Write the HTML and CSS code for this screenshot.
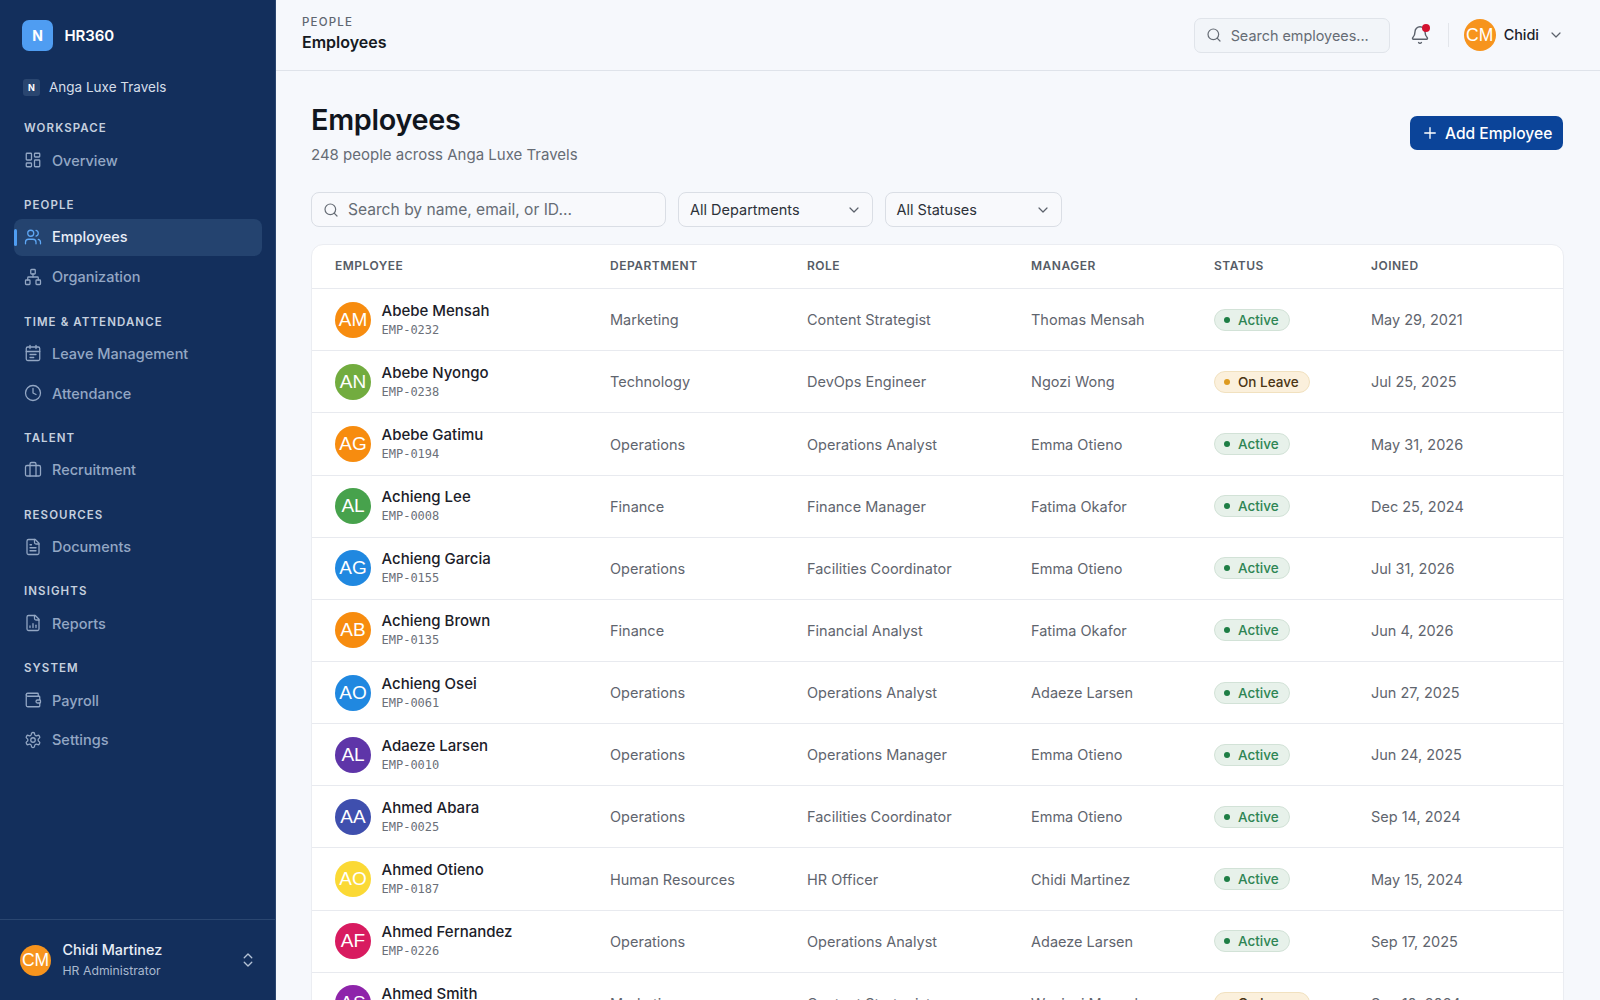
FILE: index.html
```html
<!DOCTYPE html>
<html lang="en">
<head>
<meta charset="utf-8">
<title>Employees</title>
<link rel="stylesheet" href="styles.css">
</head>
<body>
<svg class="defs" width="0" height="0">
  <defs>
    <symbol id="i-search" viewBox="0 0 24 24"><circle cx="11" cy="11" r="8"/><path d="m21 21-4.3-4.3"/></symbol>
    <symbol id="i-chev" viewBox="0 0 24 24"><path d="m6 9 6 6 6-6"/></symbol>
  </defs>
</svg>
<div class="app">
  <aside class="sidebar">
    <div class="brand"><span class="brand-logo">N</span><span class="brand-name">HR360</span></div>
    <div class="org"><span class="org-badge">N</span><span>Anga Luxe Travels</span></div>
    <nav class="nav">
      <div class="nav-label">WORKSPACE</div>
      <a class="nav-item"><svg class="ni" viewBox="0 0 24 24"><rect x="3" y="3" width="7" height="9" rx="1"/><rect x="14" y="3" width="7" height="5" rx="1"/><rect x="14" y="12" width="7" height="9" rx="1"/><rect x="3" y="16" width="7" height="5" rx="1"/></svg>Overview</a>
      <div class="nav-label">PEOPLE</div>
      <a class="nav-item active"><svg class="ni" viewBox="0 0 24 24"><path d="M16 21v-2a4 4 0 0 0-4-4H6a4 4 0 0 0-4 4v2"/><circle cx="9" cy="7" r="4"/><path d="M22 21v-2a4 4 0 0 0-3-3.87"/><path d="M16 3.13a4 4 0 0 1 0 7.75"/></svg>Employees</a>
      <a class="nav-item gap-top"><svg class="ni" viewBox="0 0 24 24"><rect x="16" y="16" width="6" height="6" rx="1"/><rect x="2" y="16" width="6" height="6" rx="1"/><rect x="9" y="2" width="6" height="6" rx="1"/><path d="M5 16v-3a1 1 0 0 1 1-1h12a1 1 0 0 1 1 1v3"/><path d="M12 12V8"/></svg>Organization</a>
      <div class="nav-label">TIME &amp; ATTENDANCE</div>
      <a class="nav-item"><svg class="ni" viewBox="0 0 24 24"><path d="M8 2v4"/><path d="M16 2v4"/><rect x="3" y="4" width="18" height="18" rx="2"/><path d="M3 10h18"/><path d="M8 14h8"/><path d="M8 18h5"/></svg>Leave Management</a>
      <a class="nav-item gap-top"><svg class="ni" viewBox="0 0 24 24"><circle cx="12" cy="12" r="10"/><path d="M12 6v6l4 2"/></svg>Attendance</a>
      <div class="nav-label">TALENT</div>
      <a class="nav-item"><svg class="ni" viewBox="0 0 24 24"><path d="M16 20V4a2 2 0 0 0-2-2h-4a2 2 0 0 0-2 2v16"/><rect x="2" y="6" width="20" height="14" rx="2"/></svg>Recruitment</a>
      <div class="nav-label">RESOURCES</div>
      <a class="nav-item"><svg class="ni" viewBox="0 0 24 24"><path d="M15 2H6a2 2 0 0 0-2 2v16a2 2 0 0 0 2 2h12a2 2 0 0 0 2-2V7Z"/><path d="M14 2v4a2 2 0 0 0 2 2h4"/><path d="M10 9H8"/><path d="M16 13H8"/><path d="M16 17H8"/></svg>Documents</a>
      <div class="nav-label">INSIGHTS</div>
      <a class="nav-item"><svg class="ni" viewBox="0 0 24 24"><path d="M15 2H6a2 2 0 0 0-2 2v16a2 2 0 0 0 2 2h12a2 2 0 0 0 2-2V7Z"/><path d="M14 2v4a2 2 0 0 0 2 2h4"/><path d="M8 18v-2"/><path d="M12 18v-5"/><path d="M16 18v-3"/></svg>Reports</a>
      <div class="nav-label">SYSTEM</div>
      <a class="nav-item"><svg class="ni" viewBox="0 0 24 24"><path d="M19 7V4a1 1 0 0 0-1-1H5a2 2 0 0 0 0 4h15a1 1 0 0 1 1 1v4h-3a2 2 0 0 0 0 4h3a1 1 0 0 0 1-1v-2a1 1 0 0 0-1-1"/><path d="M3 5v14a2 2 0 0 0 2 2h15a1 1 0 0 0 1-1v-4"/></svg>Payroll</a>
      <a class="nav-item gap-top"><svg class="ni" viewBox="0 0 24 24"><path d="M12.22 2h-.44a2 2 0 0 0-2 2v.18a2 2 0 0 1-1 1.73l-.43.25a2 2 0 0 1-2 0l-.15-.08a2 2 0 0 0-2.73.73l-.22.38a2 2 0 0 0 .73 2.73l.15.1a2 2 0 0 1 1 1.72v.51a2 2 0 0 1-1 1.74l-.15.09a2 2 0 0 0-.73 2.73l.22.38a2 2 0 0 0 2.73.73l.15-.08a2 2 0 0 1 2 0l.43.25a2 2 0 0 1 1 1.73V20a2 2 0 0 0 2 2h.44a2 2 0 0 0 2-2v-.18a2 2 0 0 1 1-1.73l.43-.25a2 2 0 0 1 2 0l.15.08a2 2 0 0 0 2.73-.73l.22-.39a2 2 0 0 0-.73-2.73l-.15-.08a2 2 0 0 1-1-1.74v-.5a2 2 0 0 1 1-1.74l.15-.09a2 2 0 0 0 .73-2.73l-.22-.38a2 2 0 0 0-2.73-.73l-.15.08a2 2 0 0 1-2 0l-.43-.25a2 2 0 0 1-1-1.73V4a2 2 0 0 0-2-2z"/><circle cx="12" cy="12" r="3"/></svg>Settings</a>
    </nav>
    <div class="side-user">
      <span class="avatar a-side">CM</span>
      <div class="side-user-text"><div class="side-user-name">Chidi Martinez</div><div class="side-user-role">HR Administrator</div></div>
      <svg class="updown" viewBox="0 0 24 24"><path d="m7 15 5 5 5-5"/><path d="m7 9 5-5 5 5"/></svg>
    </div>
  </aside>
  <div class="main">
    <header class="topbar">
      <div class="crumb"><div class="crumb-top">PEOPLE</div><div class="crumb-title">Employees</div></div>
      <div class="top-right">
        <div class="top-search"><svg class="ic16"><use href="#i-search"/></svg><span>Search employees...</span></div>
        <div class="bell"><svg viewBox="0 0 24 24"><path d="M10.27 21a2 2 0 0 0 3.46 0"/><path d="M3.26 15.33A1 1 0 0 0 4 17h16a1 1 0 0 0 .74-1.67C19.41 13.96 18 12.5 18 8A6 6 0 0 0 6 8c0 4.5-1.41 5.96-2.74 7.33"/></svg><span class="bell-dot"></span></div>
        <div class="vsep"></div>
        <div class="top-user"><span class="avatar a-top">CM</span><span class="top-user-name">Chidi</span><svg class="ic16"><use href="#i-chev"/></svg></div>
      </div>
    </header>
    <main class="content">
      <div class="page-head">
        <div><h1>Employees</h1><p>248 people across Anga Luxe Travels</p></div>
        <button class="add-btn"><svg viewBox="0 0 24 24"><path d="M5 12h14"/><path d="M12 5v14"/></svg>Add Employee</button>
      </div>
      <div class="filters">
        <div class="f-search"><svg class="ic16"><use href="#i-search"/></svg><span>Search by name, email, or ID...</span></div>
        <div class="f-select f-dept"><span>All Departments</span><svg class="ic16"><use href="#i-chev"/></svg></div>
        <div class="f-select f-status"><span>All Statuses</span><svg class="ic16"><use href="#i-chev"/></svg></div>
      </div>
      <div class="table-card">
        <div class="row head"><div>EMPLOYEE</div><div>DEPARTMENT</div><div>ROLE</div><div>MANAGER</div><div>STATUS</div><div>JOINED</div></div>

        <div class="row"><div class="emp"><span class="avatar c-orange">AM</span><div><div class="emp-name">Abebe Mensah</div><div class="emp-id">EMP-0232</div></div></div><div>Marketing</div><div>Content Strategist</div><div>Thomas Mensah</div><div><span class="pill active-pill"><i></i>Active</span></div><div>May 29, 2021</div></div>
        <div class="row"><div class="emp"><span class="avatar c-lime">AN</span><div><div class="emp-name">Abebe Nyongo</div><div class="emp-id">EMP-0238</div></div></div><div>Technology</div><div>DevOps Engineer</div><div>Ngozi Wong</div><div><span class="pill leave-pill"><i></i>On Leave</span></div><div>Jul 25, 2025</div></div>
        <div class="row"><div class="emp"><span class="avatar c-orange">AG</span><div><div class="emp-name">Abebe Gatimu</div><div class="emp-id">EMP-0194</div></div></div><div>Operations</div><div>Operations Analyst</div><div>Emma Otieno</div><div><span class="pill active-pill"><i></i>Active</span></div><div>May 31, 2026</div></div>
        <div class="row"><div class="emp"><span class="avatar c-green">AL</span><div><div class="emp-name">Achieng Lee</div><div class="emp-id">EMP-0008</div></div></div><div>Finance</div><div>Finance Manager</div><div>Fatima Okafor</div><div><span class="pill active-pill"><i></i>Active</span></div><div>Dec 25, 2024</div></div>
        <div class="row"><div class="emp"><span class="avatar c-blue">AG</span><div><div class="emp-name">Achieng Garcia</div><div class="emp-id">EMP-0155</div></div></div><div>Operations</div><div>Facilities Coordinator</div><div>Emma Otieno</div><div><span class="pill active-pill"><i></i>Active</span></div><div>Jul 31, 2026</div></div>
        <div class="row"><div class="emp"><span class="avatar c-orange">AB</span><div><div class="emp-name">Achieng Brown</div><div class="emp-id">EMP-0135</div></div></div><div>Finance</div><div>Financial Analyst</div><div>Fatima Okafor</div><div><span class="pill active-pill"><i></i>Active</span></div><div>Jun 4, 2026</div></div>
        <div class="row"><div class="emp"><span class="avatar c-blue">AO</span><div><div class="emp-name">Achieng Osei</div><div class="emp-id">EMP-0061</div></div></div><div>Operations</div><div>Operations Analyst</div><div>Adaeze Larsen</div><div><span class="pill active-pill"><i></i>Active</span></div><div>Jun 27, 2025</div></div>
        <div class="row"><div class="emp"><span class="avatar c-deep">AL</span><div><div class="emp-name">Adaeze Larsen</div><div class="emp-id">EMP-0010</div></div></div><div>Operations</div><div>Operations Manager</div><div>Emma Otieno</div><div><span class="pill active-pill"><i></i>Active</span></div><div>Jun 24, 2025</div></div>
        <div class="row"><div class="emp"><span class="avatar c-indigo">AA</span><div><div class="emp-name">Ahmed Abara</div><div class="emp-id">EMP-0025</div></div></div><div>Operations</div><div>Facilities Coordinator</div><div>Emma Otieno</div><div><span class="pill active-pill"><i></i>Active</span></div><div>Sep 14, 2024</div></div>
        <div class="row"><div class="emp"><span class="avatar c-yellow">AO</span><div><div class="emp-name">Ahmed Otieno</div><div class="emp-id">EMP-0187</div></div></div><div>Human Resources</div><div>HR Officer</div><div>Chidi Martinez</div><div><span class="pill active-pill"><i></i>Active</span></div><div>May 15, 2024</div></div>
        <div class="row"><div class="emp"><span class="avatar c-pink">AF</span><div><div class="emp-name">Ahmed Fernandez</div><div class="emp-id">EMP-0226</div></div></div><div>Operations</div><div>Operations Analyst</div><div>Adaeze Larsen</div><div><span class="pill active-pill"><i></i>Active</span></div><div>Sep 17, 2025</div></div>
        <div class="row"><div class="emp"><span class="avatar c-purple">AS</span><div><div class="emp-name">Ahmed Smith</div><div class="emp-id">EMP-0110</div></div></div><div>Marketing</div><div>Content Strategist</div><div>Wanjazi Mensah</div><div><span class="pill leave-pill"><i></i>On Leave</span></div><div>Sep 10, 2024</div></div>
      </div>
    </main>
  </div>
</div>
</body>
</html>
```
FILE: styles.css
```css
* { box-sizing: border-box; }
html, body { margin: 0; height: 100%; overflow: hidden; }
body { font-family: Inter, "Liberation Sans", sans-serif; background: #f6f8fc; color: #5b616b; }
.defs { position: absolute; }
svg { fill: none; stroke: currentColor; stroke-width: 2; stroke-linecap: round; stroke-linejoin: round; flex: none; }
.app { display: flex; height: 1000px; }

.sidebar { width: 276px; flex: none; background: #132f5c; border-right: 1px solid #2a4670; display: flex; flex-direction: column; }
.brand { display: flex; align-items: center; gap: 11.5px; padding: 0 22px; height: 71px; }
.brand-logo { width: 31px; height: 31px; border-radius: 7px; background: #4f9df2; color: #fff; font-weight: 700; font-size: 14px; display: flex; align-items: center; justify-content: center; }
.brand-name { color: #fff; font-weight: 600; font-size: 15px; letter-spacing: -0.1px; }
.org { display: flex; align-items: center; gap: 9px; padding: 0 23px; height: 30px; margin-top: 1px; color: #d5dee9; font-size: 13.5px; }
.org-badge { width: 17px; height: 17px; border-radius: 3px; background: #2a4670; color: #fff; font-size: 9px; font-weight: 700; display: flex; align-items: center; justify-content: center; }
.nav { flex: 1; padding: 0 13px 0 14px; }
.nav-label { color: #c5d0df; font-size: 11.5px; font-weight: 600; letter-spacing: 1.08px; padding-left: 10px; margin-top: 17.9px; line-height: 16px; height: 16px; margin-bottom: 4.85px; }
.nav-label:first-child { margin-top: 18.4px; }
.nav-item { display: flex; align-items: center; gap: 10px; height: 38px; padding-left: 10px; color: #93a7c4; font-size: 14.5px; font-weight: 500; border-radius: 8px; position: relative; }
.ni { width: 18px; height: 18px; stroke-width: 1.7; }
.gap-top { margin-top: 1.7px; }
.nav-item.active { background: #24436f; color: #e8eef7; height: 37.4px; margin-top: 5.45px; padding-bottom: 1px; }
.nav-item.active .ni { color: #5fa8f5; }
.nav-item.active::before { content: ""; position: absolute; left: 0; top: 10px; width: 3px; height: 17px; border-radius: 2px; background: #4f9df2; }
.side-user { height: 81px; border-top: 1px solid #2a4670; display: flex; align-items: center; padding: 0 18px 0 20px; gap: 11.5px; }
.avatar { border-radius: 50%; color: #fff; display: flex; align-items: center; justify-content: center; font-family: "Liberation Sans", sans-serif; flex: none; }
.a-side { width: 31px; height: 31px; font-size: 17.5px; background: #f7941d; }
.side-user-text { flex: 1; }
.side-user-name { color: #e8eef7; font-size: 14.4px; font-weight: 500; line-height: 20px; }
.side-user-role { color: #a9b9cf; font-size: 12.25px; line-height: 21px; }
.updown { width: 18px; height: 18px; stroke-width: 1.8; color: #b5c3d6; }

.main { flex: 1; min-width: 0; display: flex; flex-direction: column; }
.topbar { height: 71px; flex: none; border-bottom: 1px solid #dfe3ea; padding: 0 36px 0 26px; display: flex; align-items: center; justify-content: space-between; }
.crumb { margin-top: -3px; }
.crumb-top { font-size: 11.5px; font-weight: 500; letter-spacing: 1.2px; color: #5f6670; line-height: 16px; }
.crumb-title { font-size: 16px; font-weight: 600; color: #151a22; line-height: 24px; }
.top-right { display: flex; align-items: center; }
.top-search { width: 196px; height: 35px; border: 1px solid #e0e4ea; border-radius: 7px; background: #f2f5f9; display: flex; align-items: center; gap: 9px; padding-left: 11px; font-size: 14.4px; color: #666c75; }
.ic16 { width: 16px; height: 16px; stroke-width: 1.8; }
.bell { position: relative; width: 20px; height: 20px; margin-left: 20px; color: #5b616b; }
.bell svg { width: 20px; height: 20px; stroke-width: 1.7; display: block; }
.bell-dot { position: absolute; right: -0.4px; top: -1px; width: 8px; height: 8px; border-radius: 50%; background: #d3122f; }
.vsep { width: 1px; height: 24px; background: #e3e6eb; margin: 0 15px 0 18px; }
.top-user { display: flex; align-items: center; }
.a-top { width: 32px; height: 32px; font-size: 17.5px; background: #f7941d; }
.top-user-name { font-size: 14.4px; font-weight: 500; color: #1b2029; margin: -2px 9px 0 8px; }
.top-user .ic16 { color: #5b616b; }

.content { padding: 31px 36px 0 35px; }
.page-head { display: flex; justify-content: space-between; align-items: center; }
h1 { margin: 0; font-size: 28.8px; font-weight: 600; color: #11161e; line-height: 36px; letter-spacing: -0.01em; }
.page-head p { margin: 5.6px 0 0; font-size: 15px; line-height: 22px; color: #666c75; }
.add-btn { width: 153px; height: 33.5px; border: 0; border-radius: 7px; background: #0b4499; color: #fff; font: 500 15.6px Inter, sans-serif; display: flex; align-items: center; gap: 6px; padding: 0 0 0 11px; margin: 0 1px 1.5px 0; }
.add-btn svg { width: 18px; height: 18px; stroke-width: 1.8; }
.filters { display: flex; gap: 12px; margin-top: 26.8px; }
.f-search, .f-select { height: 35px; border: 1px solid #dadee5; border-radius: 8px; display: flex; align-items: center; background: #f8f9fc; }
.f-search { width: 355px; gap: 9px; padding-left: 11px; font-size: 15.6px; color: #666c75; }
.f-select { justify-content: space-between; padding: 0 10px 0 11px; font-size: 14.5px; color: #2c3139; }
.f-select svg { color: #5b616b; }
.f-dept { width: 194.5px; }
.f-status { width: 177px; }
.table-card { margin-top: 16.2px; background: #fff; border: 1px solid #ebedf2; border-radius: 12px 12px 0 0; }
.row { display: grid; grid-template-columns: 275px 197px 224px 183px 157px 1fr; padding-left: 23px; height: 62.15px; align-items: center; border-top: 1px solid #e8eaef; font-size: 14.5px; color: #5f656e; }
.row.head { height: 43.6px; border-top: 0; font-size: 12px; font-weight: 600; letter-spacing: 0.5px; color: #565c66; padding-bottom: 1px; }
.emp { display: flex; align-items: center; gap: 10.5px; }
.emp .avatar { width: 36px; height: 36px; font-size: 19px; }
.emp-name { font-size: 15px; font-weight: 500; color: #1b2029; line-height: 20px; }
.emp-id { font-family: "DejaVu Sans Mono", "Liberation Mono", monospace; font-size: 12px; color: #6b7079; line-height: 18px; }
.pill { display: inline-flex; align-items: center; height: 22px; border-radius: 11px; padding: 0 10px 0 9px; font-size: 13.5px; font-weight: 500; gap: 8px; border: 1px solid; vertical-align: middle; }
.pill i { width: 6px; height: 6px; border-radius: 50%; }
.active-pill { background: #e7f1ea; border-color: #d2e2d7; color: #2e8554; }
.active-pill i { background: #1e7e45; }
.leave-pill { background: #fbf0dc; border-color: #f1e1bf; color: #4a3514; }
.leave-pill i { background: #dd9a1f; }
.c-orange { background: #f78c0f; }
.c-lime { background: #72ac3f; }
.c-green { background: #47a24c; }
.c-blue { background: #2088e0; }
.c-deep { background: #5e35a8; }
.c-indigo { background: #3f4fae; }
.c-yellow { background: #fbd935; }
.c-pink { background: #d81b60; }
.c-purple { background: #8e24aa; }
```
